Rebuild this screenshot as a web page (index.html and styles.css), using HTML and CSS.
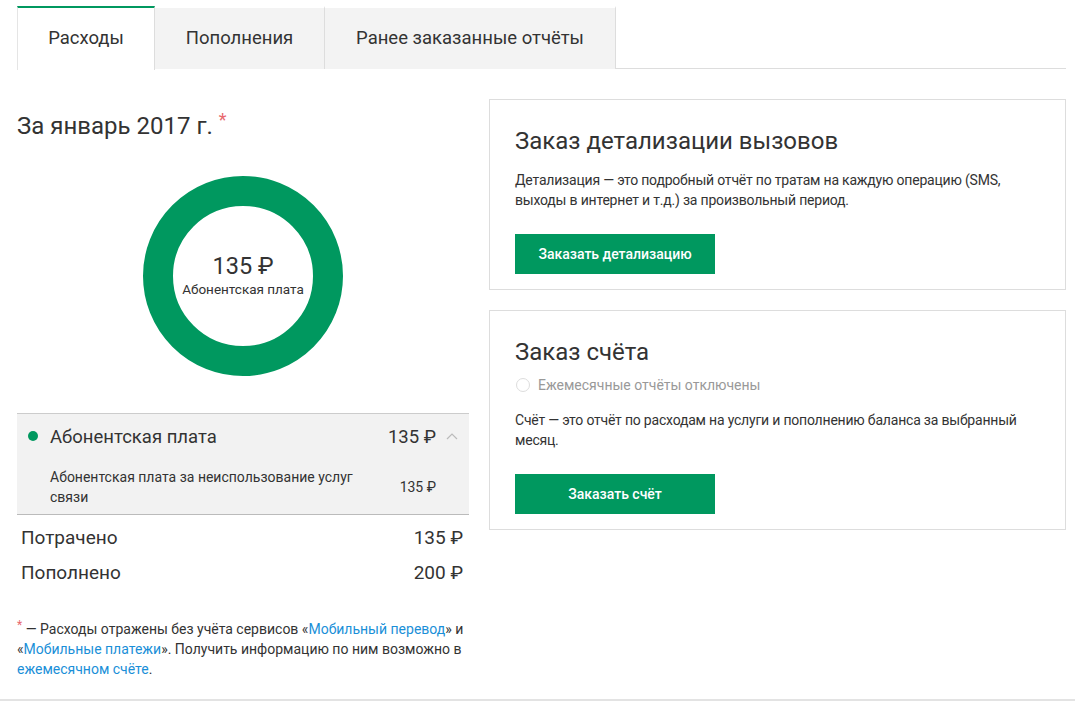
FILE: index.html
```html
<!DOCTYPE html>
<html lang="ru">
<head>
<meta charset="utf-8">
<link rel="stylesheet" href="styles.css">
</head>
<body>
<div class="page">
  <div class="tabs">
    <div class="tab active">Расходы</div>
    <div class="tab">Пополнения</div>
    <div class="tab">Ранее заказанные отчёты</div>
  </div>
  <div class="main">
    <div class="left">
      <h2 class="period">За январь 2017 г. <span class="star">*</span></h2>
      <div class="donut">
        <svg width="200" height="200" viewBox="0 0 200 200">
          <circle cx="100" cy="100" r="85" fill="none" stroke="#00985f" stroke-width="30"/>
        </svg>
        <div class="donut-label">
          <div class="donut-sum">135 ₽</div>
          <div class="donut-name">Абонентская плата</div>
        </div>
      </div>
      <div class="group">
        <div class="group-head">
          <span class="dot"></span>
          <span class="group-name">Абонентская плата</span>
          <span class="group-sum">135 ₽</span>
          <svg class="chev" width="12" height="8" viewBox="0 0 12 8"><path d="M1 7 L6 2 L11 7" fill="none" stroke="#bbb" stroke-width="1.2"/></svg>
        </div>
        <div class="group-item">
          <span class="item-name">Абонентская плата за неиспользование услуг связи</span>
          <span class="item-sum">135 ₽</span>
        </div>
      </div>
      <div class="total first"><span>Потрачено</span><span>135 ₽</span></div>
      <div class="total"><span>Пополнено</span><span>200 ₽</span></div>
      <p class="note"><span class="note-star">*</span> — Расходы отражены без учёта сервисов «<a href="#">Мобильный перевод</a>» и «<a href="#">Мобильные платежи</a>». Получить информацию по ним возможно в <a href="#">ежемесячном счёте</a>.</p>
    </div>
    <div class="right">
      <div class="card">
        <h3 class="card-title">Заказ детализации вызовов</h3>
        <p class="card-text">Детализация — это подробный отчёт по тратам на каждую операцию (SMS, выходы в интернет и т.д.) за произвольный период.</p>
        <button class="btn">Заказать детализацию</button>
      </div>
      <div class="card">
        <h3 class="card-title">Заказ счёта</h3>
        <div class="radio"><span class="radio-circle"></span><span>Ежемесячные отчёты отключены</span></div>
        <p class="card-text">Счёт — это отчёт по расходам на услуги и пополнению баланса за выбранный месяц.</p>
        <button class="btn">Заказать счёт</button>
      </div>
    </div>
  </div>
  <div class="bottom-line"></div>
</div>
</body>
</html>
```
FILE: styles.css
```css
* { box-sizing: border-box; }
html, body { margin: 0; padding: 0; background: #fff; }
body {
  font-family: Roboto, "Liberation Sans", sans-serif;
  color: #333;
  width: 1075px;
  height: 701px;
  overflow: hidden;
}
.page {
  padding: 6px 9px 0 17px;
  display: flex;
  flex-direction: column;
  height: 701px;
}
.tabs {
  display: flex;
  border-bottom: 1px solid #ddd;
  height: 63px;
}
.tab {
  height: 63px;
  display: flex;
  align-items: center;
  justify-content: center;
  font-size: 18.5px;
  color: #333;
  background: #f3f3f3;
  border: 1px solid #ddd;
  border-left: none;
  border-top: 2px solid #fff;
  border-bottom: none;
  padding: 0 0 2px;
}
.tab:nth-child(2) { width: 170px; }
.tab:nth-child(3) { width: 291px; }
.tab.active {
  width: 138px;
  background: #fff;
  border-top: 2px solid #00985f;
  border-left: 1px solid #e5e5e5;
  border-right: 1px solid #ddd;
  height: 64px;
  margin-bottom: -1px;
}
.main {
  display: flex;
  gap: 20px;
  margin-top: 30px;
  flex: 1;
}
.left {
  width: 452px;
  flex: none;
}
.period {
  margin: 7px 0 0;
  font-size: 24px;
  font-weight: 400;
  line-height: 28px;
  color: #333;
}
.star {
  color: #e8686e;
  font-size: 18px;
  vertical-align: 8px;
}
.donut {
  position: relative;
  width: 200px;
  height: 200px;
  margin: 36px auto 0;
}
.donut svg { display: block; }
.donut-label {
  position: absolute;
  inset: 0;
  display: flex;
  flex-direction: column;
  align-items: center;
  justify-content: center;
}
.donut-sum { font-size: 23.5px; line-height: 26px; color: #333; margin-top: -3px; }
.donut-name { font-size: 13.5px; line-height: 16px; margin-top: 2px; color: #333; }
.group {
  margin-top: 37px;
  background: #f2f2f2;
  border-top: 1px solid #ccc;
  border-bottom: 1px solid #bbb;
  padding: 0 0 7px;
}
.group-head {
  display: flex;
  align-items: center;
  height: 46px;
  padding: 0 11px 0 11px;
}
.dot {
  width: 10px;
  height: 10px;
  border-radius: 50%;
  background: #00985f;
  margin-right: 12px;
  margin-top: -2px;
}
.group-name { font-size: 18.5px; flex: 1; }
.group-sum { font-size: 18.5px; margin-right: 10px; }
.chev { display: block; margin-top: -2px; }
.group-item {
  display: flex;
  align-items: center;
  margin-top: 7px;
  padding: 0 33px;
  font-size: 14px;
  line-height: 20px;
}
.item-name { flex: 1; max-width: 320px; }
.item-sum { margin-left: auto; }
.total {
  display: flex;
  justify-content: space-between;
  font-size: 19px;
  line-height: 35px;
  padding: 0 6px 0 4px;
}
.total.first { margin-top: 5px; }
.note {
  margin: 25px 0 0;
  font-size: 14px;
  line-height: 20px;
  color: #333;
}
.note-star {
  color: #e8686e;
  font-size: 12px;
  vertical-align: 5px;
}
.note a { color: #1a8fd8; text-decoration: none; }
.right {
  flex: 1;
  display: flex;
  flex-direction: column;
  gap: 20px;
}
.card {
  border: 1px solid #ddd;
  padding: 26px 25px 15px;
}
.card-title {
  margin: 0;
  font-size: 24px;
  font-weight: 400;
  line-height: 30px;
  color: #333;
}
.card-text {
  margin: 14px 0 24px;
  font-size: 14px;
  line-height: 20px;
  letter-spacing: -0.2px;
  max-width: 512px;
}
.btn {
  display: block;
  width: 200px;
  height: 40px;
  border: none;
  background: #00985f;
  color: #fff;
  font-family: Roboto, "Liberation Sans", sans-serif;
  font-size: 14px;
  font-weight: 500;
  cursor: pointer;
  padding: 0;
}
.radio {
  display: flex;
  align-items: center;
  margin-top: 10px;
  font-size: 14px;
  color: #999;
}
.radio-circle {
  width: 14px;
  height: 14px;
  border-radius: 50%;
  border: 1px solid #ddd;
  margin: 0 8px 0 1px;
}
.radio + .card-text { margin-top: 17px; }
.bottom-line {
  margin: auto -9px 0 -17px;
  height: 2px;
  background: #e3e3e3;
}
```
